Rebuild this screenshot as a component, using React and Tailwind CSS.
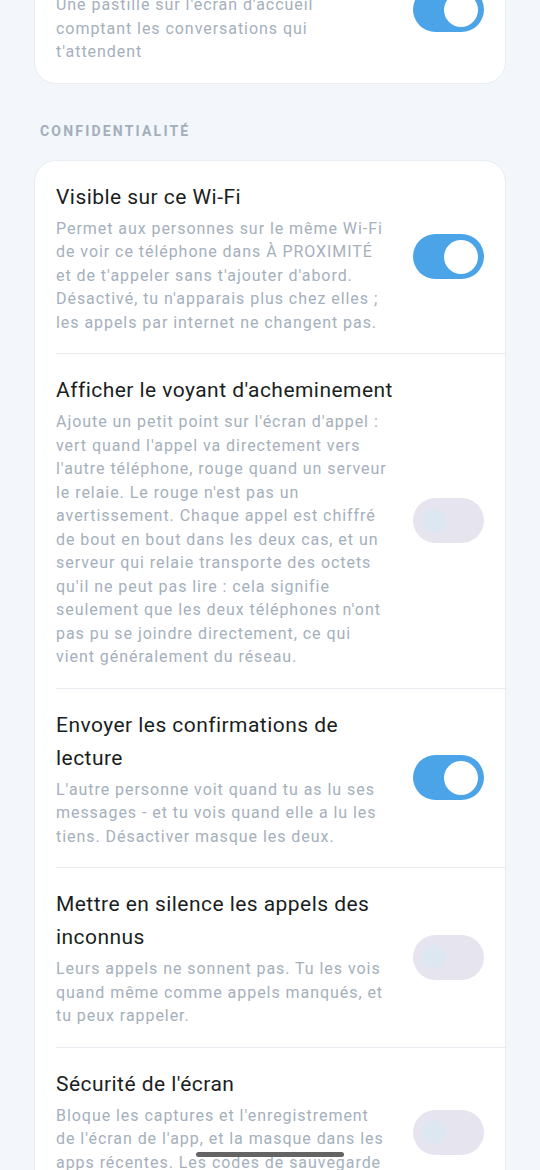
import React, { useState } from "react";

const font = { fontFamily: "Roboto, 'Noto Sans', sans-serif" };

const Toggle = ({ on, onClick }) => {
  return (
    <button
      type="button"
      onClick={onClick}
      className={`relative shrink-0 w-[71px] h-[45px] rounded-full ${
        on ? "bg-[#4ba4e7]" : "bg-[#e6e4ee]"
      }`}
    >
      {on ? (
        <span className="absolute right-[6px] top-[5.5px] w-[34px] h-[34px] rounded-full bg-white" />
      ) : (
        <span className="absolute left-[9px] top-[10.5px] w-[24px] h-[24px] rounded-full bg-[#dde7f1]" />
      )}
    </button>
  );
};

const Row = ({ title, desc, on, onToggle, last }) => {
  return (
    <div className={`ml-[21px] pr-[21px] flex items-center gap-[20px] ${last ? "" : "border-b border-[#e8ecf0]"}`}>
      <div className="flex-1 pt-[20px] pb-[19px]">
        <p className="text-[21px] leading-[33px] text-[#1a1e22] tracking-[0.45px]">{title}</p>
        <p className="mt-[3px] text-[16px] leading-[23.5px] text-[#a5b0bc] tracking-[0.95px]">{desc}</p>
      </div>
      <Toggle on={on} onClick={onToggle} />
    </div>
  );
};

const Card = ({ children }) => (
  <div className="bg-white rounded-[22px] border border-[#e8edf2] overflow-hidden">{children}</div>
);

export default function App() {
  const [settings, setSettings] = useState({
    badge: true,
    wifi: true,
    route: false,
    receipts: true,
    silence: false,
    secure: false,
  });

  const flip = (key) => setSettings((prev) => ({ ...prev, [key]: !prev[key] }));

  return (
    <div className="min-h-screen bg-[#f3f6fa] overflow-hidden relative" style={font}>
      <div className="px-[34px] -mt-[64px] pb-10">
        <Card>
          <Row
            title="Pastille de l'icône"
            desc="Une pastille sur l'écran d'accueil comptant les conversations qui t'attendent"
            on={settings.badge}
            onToggle={() => flip("badge")}
            last
          />
        </Card>

        <p className="px-[6px] pt-[38px] pb-[20px] text-[14px] leading-[18px] font-bold tracking-[2.2px] text-[#a3afbb]">
          CONFIDENTIALITÉ
        </p>

        <Card>
          <Row
            title="Visible sur ce Wi-Fi"
            desc="Permet aux personnes sur le même Wi-Fi de voir ce téléphone dans À PROXIMITÉ et de t'appeler sans t'ajouter d'abord. Désactivé, tu n'apparais plus chez elles ; les appels par internet ne changent pas."
            on={settings.wifi}
            onToggle={() => flip("wifi")}
          />
          <Row
            title="Afficher le voyant d'acheminement"
            desc="Ajoute un petit point sur l'écran d'appel : vert quand l'appel va directement vers l'autre téléphone, rouge quand un serveur le relaie. Le rouge n'est pas un avertissement. Chaque appel est chiffré de bout en bout dans les deux cas, et un serveur qui relaie transporte des octets qu'il ne peut pas lire : cela signifie seulement que les deux téléphones n'ont pas pu se joindre directement, ce qui vient généralement du réseau."
            on={settings.route}
            onToggle={() => flip("route")}
          />
          <Row
            title="Envoyer les confirmations de lecture"
            desc="L'autre personne voit quand tu as lu ses messages - et tu vois quand elle a lu les tiens. Désactiver masque les deux."
            on={settings.receipts}
            onToggle={() => flip("receipts")}
          />
          <Row
            title="Mettre en silence les appels des inconnus"
            desc="Leurs appels ne sonnent pas. Tu les vois quand même comme appels manqués, et tu peux rappeler."
            on={settings.silence}
            onToggle={() => flip("silence")}
          />
          <Row
            title="Sécurité de l'écran"
            desc="Bloque les captures et l'enregistrement de l'écran de l'app, et la masque dans les apps récentes. Les codes de sauvegarde restent ainsi à l'abri des regards."
            on={settings.secure}
            onToggle={() => flip("secure")}
            last
          />
        </Card>
      </div>

      <div className="fixed bottom-[13px] left-1/2 -translate-x-1/2 w-[148px] h-[5px] rounded-full bg-[#646464]" />
    </div>
  );
}
